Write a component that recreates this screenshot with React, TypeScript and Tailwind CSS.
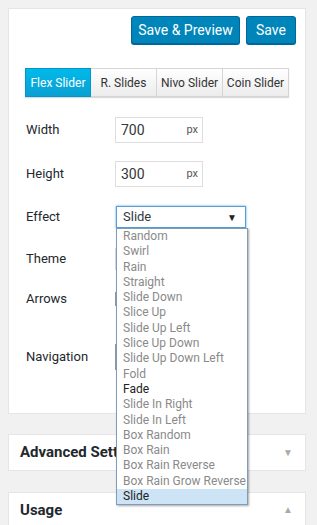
import React from 'react'

const effects = [
  'Random',
  'Swirl',
  'Rain',
  'Straight',
  'Slide Down',
  'Slice Up',
  'Slide Up Left',
  'Slice Up Down',
  'Slide Up Down Left',
  'Fold',
  'Fade',
  'Slide In Right',
  'Slide In Left',
  'Box Random',
  'Box Rain',
  'Box Rain Reverse',
  'Box Rain Grow Reverse',
  'Slide',
]

const tabs = ['Flex Slider', 'R. Slides', 'Nivo Slider', 'Coin Slider']

const NumberInput = ({ value }: { value: string }) => (
  <div className="flex h-[26px] w-[88px] items-center border border-[#dddddd] bg-white pl-[5px] pr-[4px] text-[14px] text-[#32373c]">
    <span className="flex-1">{value}</span>
    <span className="text-[11px] text-[#555]">px</span>
  </div>
)

const App = () => {
  return (
    <div className="min-h-[525px] bg-[#f1f1f1] pt-2 font-['Roboto','Liberation_Sans',sans-serif] text-[#23282d]">
      <div className="ml-2 h-[406px] w-[298px] border border-[#e5e5e5] bg-white">
        <div className="flex justify-end gap-[6px] pr-[9px] pt-[7px]">
          <button className="h-[28px] w-[109px] rounded-[3px] border border-[#006799] bg-[#0085ba] text-[14px] text-white shadow-[0_1px_0_#006799]">
            Save &amp; Preview
          </button>
          <button className="h-[28px] w-[50px] rounded-[3px] border border-[#006799] bg-[#0085ba] text-[14px] text-white shadow-[0_1px_0_#006799]">
            Save
          </button>
        </div>

        <div className="ml-4 mt-6 flex h-[29px] w-fit shadow-[0_1px_1px_rgba(0,0,0,0.15)]">
          {tabs.map((t, i) => (
            <div
              key={t}
              className={
                i === 0
                  ? 'flex w-[66px] items-center justify-center border border-[#0096c9] bg-gradient-to-b from-[#00b9eb] to-[#0a9fd2] text-[12px] text-white'
                  : 'flex w-[66px] items-center justify-center border border-l-0 border-[#d5d5d5] bg-gradient-to-b from-white to-[#ececec] text-[12px] text-[#333]'
              }
            >
              {t}
            </div>
          ))}
        </div>

        <div className="pl-[17px] text-[13px]">
          <div className="mt-5 flex h-[26px] items-center">
            <span className="w-[89px]">Width</span>
            <NumberInput value="700" />
          </div>
          <div className="mt-[18px] flex h-[26px] items-center">
            <span className="w-[89px]">Height</span>
            <NumberInput value="300" />
          </div>
          <div className="mt-[19px] flex h-[22px] items-center">
            <span className="w-[90px]">Effect</span>
            <div className="relative">
              <div className="flex h-[22px] w-[130px] items-center border border-[#5b9dd9] pl-[6px] pr-[8px] text-[13px] text-[#32373c] shadow-[0_0_2px_rgba(30,140,190,0.8)]">
                <span className="flex-1">Slide</span>
                <span className="text-[10px] text-[#222]">▼</span>
              </div>
              <div className="absolute left-0 top-[22px] z-10 w-[132px] border border-[#7f9db9] bg-white shadow-[1px_1px_2px_rgba(0,0,0,0.35)]">
                {effects.map((e) => (
                  <div
                    key={e}
                    className={
                      e === 'Slide'
                        ? 'h-[15.3px] whitespace-nowrap bg-[#cde4f7] pl-[6px] text-[12px] leading-[15.3px] text-[#222]'
                        : e === 'Fade'
                          ? 'h-[15.3px] whitespace-nowrap pl-[6px] text-[12px] leading-[15.3px] text-[#222]'
                          : 'h-[15.3px] whitespace-nowrap pl-[6px] text-[12px] leading-[15.3px] text-[#8a8a8a]'
                    }
                  >
                    {e}
                  </div>
                ))}
              </div>
            </div>
          </div>
          <div className="mt-5 flex h-[22px] items-center">
            <span className="w-[89px]">Theme</span>
            <div className="h-[22px] w-[130px] border border-[#ddd]" />
          </div>
          <div className="mt-[18px] flex h-[22px] items-center">
            <span className="w-[89px]">Arrows</span>
            <div className="h-[14px] w-[30px] border border-[#999]" />
          </div>
          <div className="mt-9 flex h-[22px] items-center">
            <span className="w-[89px]">Navigation</span>
            <div className="h-[26px] w-[30px] border border-[#999]" />
          </div>
        </div>
      </div>

      <div className="ml-2 mt-[20px] flex h-[37px] w-[298px] items-center justify-between border border-[#e5e5e5] bg-white pl-[11px] pr-[12px]">
        <span className="text-[15px] font-bold">Advanced Settings</span>
        <span className="text-[10px] text-[#aaa]">▼</span>
      </div>

      <div className="ml-2 mt-[21px] flex h-[40px] w-[298px] items-start justify-between border border-[#e5e5e5] bg-white pl-[11px] pr-[12px] pt-[6px]">
        <span className="text-[15px] font-bold">Usage</span>
        <span className="pt-[3px] text-[10px] text-[#aaa]">▲</span>
      </div>
    </div>
  )
}

export default App
